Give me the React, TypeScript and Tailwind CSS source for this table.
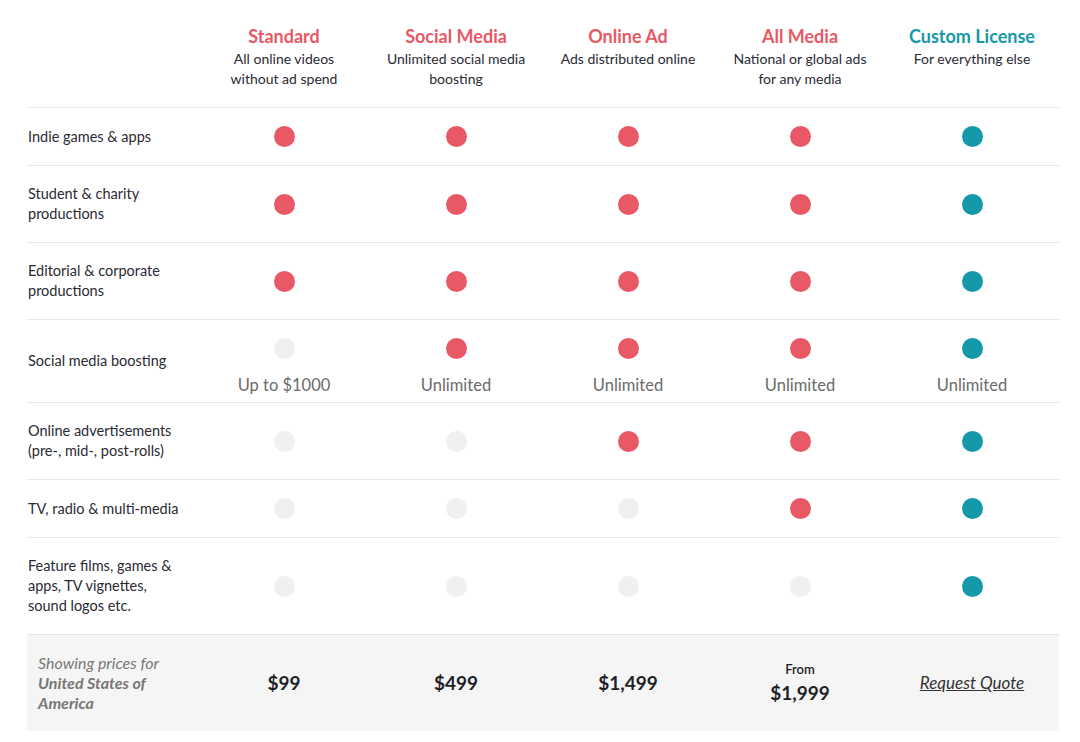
import React from "react";

type Dot = "red" | "teal" | "off";

const plans = [
  { name: "Standard", desc: ["All online videos", "without ad spend"], custom: false },
  { name: "Social Media", desc: ["Unlimited social media", "boosting"], custom: false },
  { name: "Online Ad", desc: ["Ads distributed online"], custom: false },
  { name: "All Media", desc: ["National or global ads", "for any media"], custom: false },
  { name: "Custom License", desc: ["For everything else"], custom: true },
];

const features: { label: string[]; note?: string[] }[] = [
  { label: ["Indie games & apps"] },
  { label: ["Student & charity", "productions"] },
  { label: ["Editorial & corporate", "productions"] },
  {
    label: ["Social media boosting"],
    note: ["Up to $1000", "Unlimited", "Unlimited", "Unlimited", "Unlimited"],
  },
  { label: ["Online advertisements", "(pre-, mid-, post-rolls)"] },
  { label: ["TV, radio & multi-media"] },
  { label: ["Feature films, games &", "apps, TV vignettes,", "sound logos etc."] },
];

// which plan includes which feature
const included = [
  [true, true, true, true, true],
  [true, true, true, true, true],
  [true, true, true, true, true],
  [false, true, true, true, true],
  [false, false, true, true, true],
  [false, false, false, true, true],
  [false, false, false, false, true],
];

function Circle({ kind }: { kind: Dot }) {
  const cls =
    kind === "red" ? "bg-[#e85865]" : kind === "teal" ? "bg-[#1598a9]" : "bg-[#f0f0f0]";
  return <span className={`block w-[21px] h-[21px] rounded-full ${cls}`} />;
}

export default function App() {
  return (
    <div className="w-[1080px] h-[742px] bg-white font-['Lato','Noto_Sans',sans-serif] text-[#222]">
      <div className="ml-[27px] w-[1032px]">
        {/* header */}
        <div className="grid grid-cols-[171px_repeat(5,172px)] pt-[25px] pb-[18px] border-b border-[#e6e6e6]">
          <div />
          {plans.map((p) => (
            <div key={p.name} className="flex flex-col items-center text-center">
              <div
                className={`text-[18px] leading-[22px] font-bold ${
                  p.custom ? "text-[#1598a9]" : "text-[#e85865]"
                }`}
              >
                {p.name}
              </div>
              <div className="mt-[2px] text-[14px] leading-5 text-[#2a2a33]">
                {p.desc.map((d) => (
                  <div key={d}>{d}</div>
                ))}
              </div>
            </div>
          ))}
        </div>

        {/* feature rows */}
        {features.map((f, i) => (
          <div
            key={f.label[0]}
            className={`grid grid-cols-[171px_repeat(5,172px)] border-b border-[#e6e6e6] ${
              f.note ? "h-[83px]" : "py-[18px]"
            }`}
          >
            <div className="flex items-center pl-px text-[14.5px] leading-5 text-[#2a2a33]">
              <div>
                {f.label.map((l) => (
                  <div key={l}>{l}</div>
                ))}
              </div>
            </div>
            {included[i].map((on, c) => (
              <div
                key={c}
                className={`flex flex-col items-center ${f.note ? "pt-[18px]" : "justify-center"}`}
              >
                <Circle kind={!on ? "off" : c === 4 ? "teal" : "red"} />
                {f.note && (
                  <div className="mt-[16px] text-[16.5px] leading-5 text-[#6b6b6b]">{f.note[c]}</div>
                )}
              </div>
            ))}
          </div>
        ))}

        {/* prices */}
        <div className="grid grid-cols-[171px_repeat(5,172px)] h-[96px] bg-[#f5f5f5]">
          <div className="flex items-center pl-[11px] text-[16px] leading-5 italic text-[#777]">
            <div>
              <div>Showing prices for</div>
              <div className="font-bold">United States of</div>
              <div className="font-bold">America</div>
            </div>
          </div>
          <div className="flex items-center justify-center text-[19px] font-bold text-[#1f1f28]">$99</div>
          <div className="flex items-center justify-center text-[19px] font-bold text-[#1f1f28]">$499</div>
          <div className="flex items-center justify-center text-[19px] font-bold text-[#1f1f28]">$1,499</div>
          <div className="flex flex-col items-center justify-center text-[#1f1f28]">
            <div className="text-[13px] leading-4 font-semibold">From</div>
            <div className="text-[19px] leading-6 font-bold mt-[4px]">$1,999</div>
          </div>
          <div className="flex items-center justify-center">
            <a href="#" className="text-[17px] italic underline text-[#333]">
              Request Quote
            </a>
          </div>
        </div>
      </div>
    </div>
  );
}
